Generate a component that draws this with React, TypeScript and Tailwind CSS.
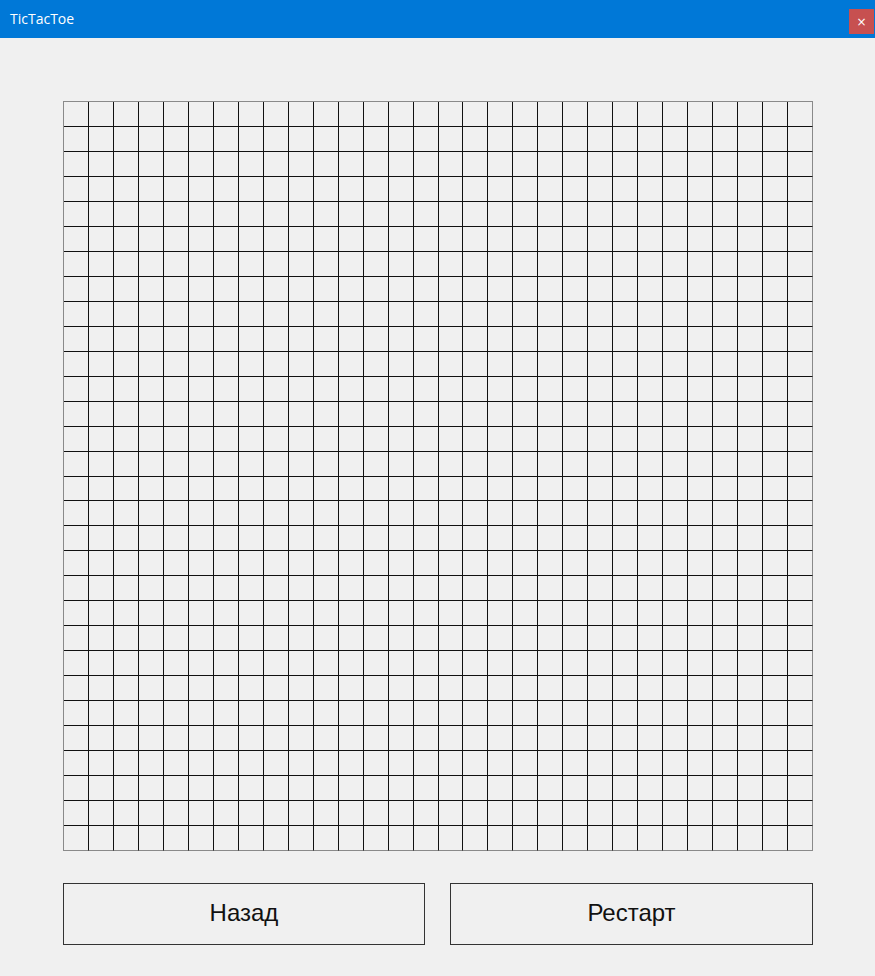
import React from "react"

const SIZE = 30

export default function App() {
  const cells = Array.from({ length: SIZE * SIZE }, (_, i) => i)

  return (
    <div className="w-[875px] h-[976px] bg-[#f0f0f0] flex flex-col overflow-hidden">
      {/* title bar */}
      <div className="h-[38px] bg-[#0078d7] flex items-center justify-between pl-[10px] pr-[1px]">
        <span className="text-white text-[14px] leading-none mb-[1px] font-[family-name:'Open_Sans',sans-serif]">
          TicTacToe
        </span>
        <div className="w-[25px] h-[25px] bg-[#c75050] flex items-center justify-center mt-[5px]">
          <span className="text-white text-[12px] leading-none font-[family-name:'DejaVu_Sans',sans-serif]">
            ×
          </span>
        </div>
      </div>

      {/* board */}
      <div className="pl-[63px] pt-[63px]">
        <div className="w-[750px] h-[750px] border-l border-t border-[#8a8a8a] grid grid-cols-[repeat(30,minmax(0,1fr))] grid-rows-[repeat(30,minmax(0,1fr))]">
          {cells.map((i) => {
            const lastCol = i % SIZE === SIZE - 1
            const lastRow = i >= SIZE * (SIZE - 1)
            return (
              <div
                key={`cell_${i}`}
                className={`border-r border-b ${
                  lastCol ? "border-r-[#8a8a8a]" : "border-r-[#111]"
                } ${lastRow ? "border-b-[#8a8a8a]" : "border-b-[#111]"}`}
              />
            )
          })}
        </div>

        {/* buttons */}
        <div className="flex gap-[25px] mt-[32px] w-[750px]">
          <button className="w-[362px] h-[62px] border border-[#333] bg-[#f0f0f0] text-[24px] text-[#111] font-[family-name:'Liberation_Sans',sans-serif] pb-[2px]">
            Назад
          </button>
          <button className="w-[363px] h-[62px] border border-[#333] bg-[#f0f0f0] text-[24px] text-[#111] font-[family-name:'Liberation_Sans',sans-serif] pb-[2px]">
            Рестарт
          </button>
        </div>
      </div>
    </div>
  )
}
